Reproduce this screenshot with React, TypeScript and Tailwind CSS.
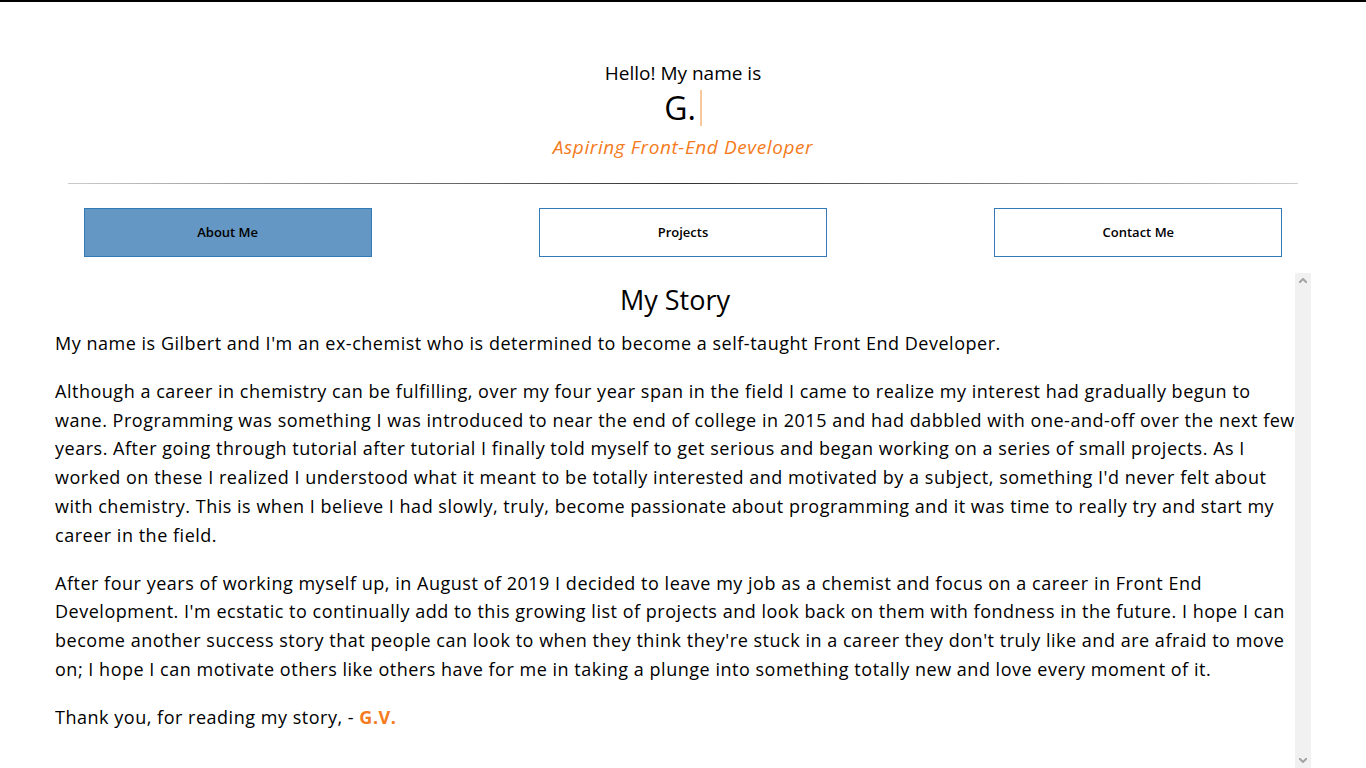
import React from 'react';

const font = { fontFamily: "'Open Sans', 'Noto Sans', sans-serif" };

function NavButton({ label, active }: { label: string; active?: boolean }) {
  return (
    <div className="flex justify-center">
      <button
        className={
          'h-[49px] w-[288px] border border-[#337ab7] text-[13px] font-semibold text-black ' +
          (active ? 'bg-[#6497c3]' : 'bg-white')
        }
      >
        {label}
      </button>
    </div>
  );
}

function ScrollTrack() {
  return (
    <div className="flex w-[16px] shrink-0 flex-col items-center justify-between bg-[#f1f1f1] py-[5px]">
      <svg width="8" height="5" viewBox="0 0 8 5">
        <path d="M0 5 L4 1 L8 5" fill="none" stroke="#a3a3a3" strokeWidth="2" />
      </svg>
      <svg width="8" height="5" viewBox="0 0 8 5">
        <path d="M0 0 L4 4 L8 0" fill="none" stroke="#a3a3a3" strokeWidth="2" />
      </svg>
    </div>
  );
}

export default function App() {
  return (
    <div className="h-[768px] overflow-hidden border-t-2 border-black bg-white text-black" style={font}>
      <header className="flex flex-col items-center pt-[57px]">
        <p className="text-[19px] leading-[28px]">Hello! My name is</p>
        <div className="mt-[2px] flex h-[38px] items-center">
          <span className="text-[32px] leading-[36px]">G.</span>
          <span className="ml-[4px] h-[36px] w-[2px] bg-[#f8c99a]" />
        </div>
        <p className="mt-[6px] text-[19px] italic leading-[28px] tracking-[0.6px] text-[#f47b20]">
          Aspiring Front-End Developer
        </p>
      </header>

      <div className="mx-[68px] mt-[22px] h-px bg-gradient-to-r from-[#cccccc] via-[#333333] to-[#cccccc]" />

      <nav className="mt-[24px] grid grid-cols-3">
        <NavButton label="About Me" active />
        <NavButton label="Projects" />
        <NavButton label="Contact Me" />
      </nav>

      <div className="mx-auto mt-[16px] flex h-[495px] w-[1256px]">
        <main className="flex-1 overflow-hidden text-[18px] leading-[28.8px] tracking-[0.52px]">
          <h2 className="mt-[11px] text-center text-[27px] leading-[32px] tracking-normal">My Story</h2>
          <p className="mt-[13px]">
            My name is Gilbert and I'm an ex-chemist who is determined to become a self-taught Front End Developer.
          </p>
          <p className="mt-[19px]">
            Although a career in chemistry can be fulfilling, over my four year span in the field I came to realize my
            interest had gradually begun to wane. Programming was something I was introduced to near the end of college
            in 2015 and had dabbled with one-and-off over the next few years. After going through tutorial after
            tutorial I finally told myself to get serious and began working on a series of small projects. As I worked
            on these I realized I understood what it meant to be totally interested and motivated by a subject,
            something I'd never felt about with chemistry. This is when I believe I had slowly, truly, become passionate
            about programming and it was time to really try and start my career in the field.
          </p>
          <p className="mt-[19px]">
            After four years of working myself up, in August of 2019 I decided to leave my job as a chemist and focus on
            a career in Front End Development. I'm ecstatic to continually add to this growing list of projects and look
            back on them with fondness in the future. I hope I can become another success story that people can look to
            when they think they're stuck in a career they don't truly like and are afraid to move on; I hope I can
            motivate others like others have for me in taking a plunge into something totally new and love every moment
            of it.
          </p>
          <p className="mt-[19px]">
            Thank you, for reading my story, - <span className="font-bold text-[#f47b20]">G.V.</span>
          </p>
        </main>
        <ScrollTrack />
      </div>
    </div>
  );
}
